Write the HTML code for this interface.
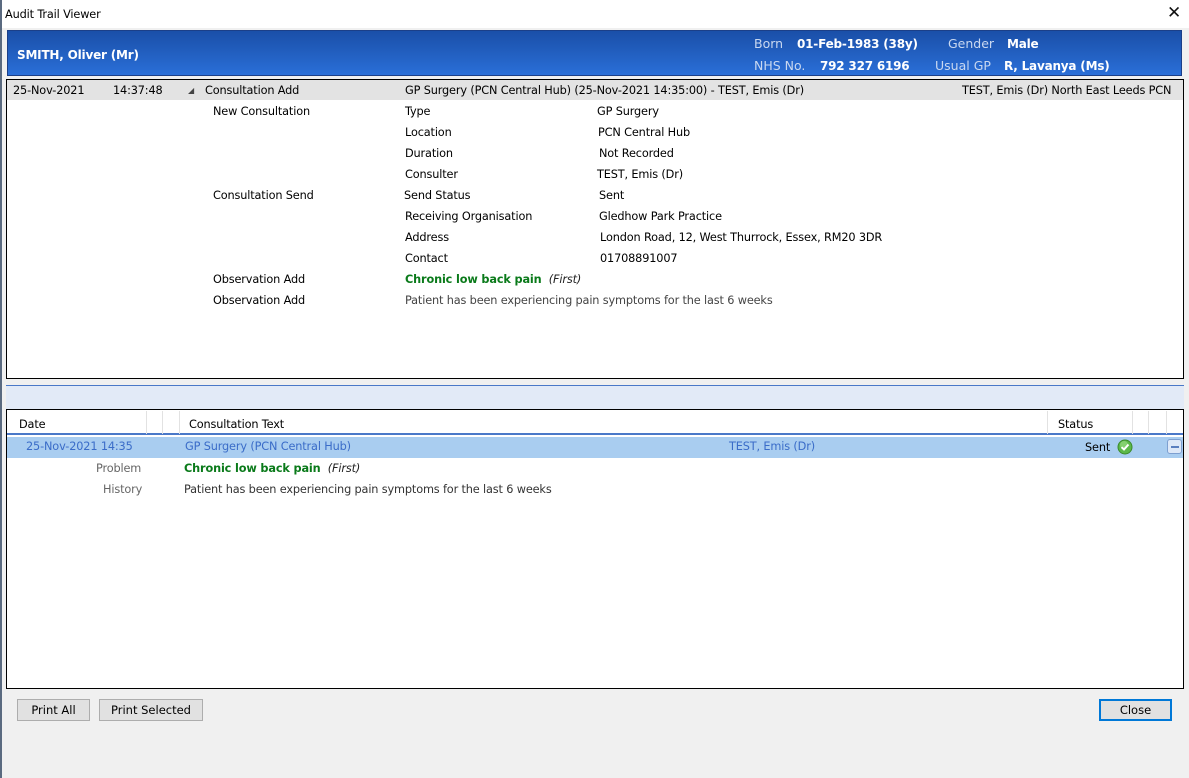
<!DOCTYPE html>
<html><head><meta charset="utf-8"><style>
*{margin:0;padding:0;box-sizing:border-box}
body{width:1189px;height:778px;background:#f0f0f0;font-family:"DejaVu Sans","Liberation Sans",sans-serif;font-size:12px;color:#000;position:relative;overflow:hidden}
.a{position:absolute;white-space:nowrap;line-height:16px;margin-top:1px}
.t{font-size:11.3px;letter-spacing:-0.15px}
.hb{color:#fff;font-weight:bold;font-size:12px;letter-spacing:-0.2px}
.hl{color:#c9d8f0;font-size:12.5px}
.btn{position:absolute;background:#e1e1e1;border:1px solid #adadad;text-align:center;line-height:21px;font-size:11.5px}
</style></head><body>
<div style="position:absolute;left:0;top:0;width:1189px;height:28px;background:#fff"></div>
<div style="position:absolute;left:0;top:0;width:2px;height:778px;background:#5a6a80"></div>
<div class="a t" style="left:5px;top:6px">Audit Trail Viewer</div>
<div class="a" style="left:1167px;top:4px;font-size:17px;font-family:'DejaVu Sans',sans-serif;color:#111">✕</div>
<div style="position:absolute;left:7px;top:30px;width:1175px;height:46px;background:linear-gradient(#1a4fa8,#2a6fd8);border:1px solid #1b3f88"></div>
<div class="a hb" style="left:17px;top:46px">SMITH, Oliver (Mr)</div>
<div class="a hl" style="left:754px;top:35px">Born</div>
<div class="a hb" style="left:797px;top:35px">01-Feb-1983 (38y)</div>
<div class="a hl" style="left:948px;top:35px">Gender</div>
<div class="a hb" style="left:1007px;top:35px">Male</div>
<div class="a hl" style="left:754px;top:57px">NHS No.</div>
<div class="a hb" style="left:820px;top:57px">792 327 6196</div>
<div class="a hl" style="left:935px;top:57px">Usual GP</div>
<div class="a hb" style="left:1004px;top:57px">R, Lavanya (Ms)</div>

<div style="position:absolute;left:6px;top:79px;width:1178px;height:300px;background:#fff;border:1px solid #000"></div>
<div style="position:absolute;left:7px;top:80px;width:1176px;height:20px;background:#e3e3e3"></div>
<div class="t a" style="left:13px;top:82px">25-Nov-2021</div>
<div class="t a" style="left:113px;top:82px">14:37:48</div>
<div class="a" style="left:188px;top:82px;font-size:8px;color:#444">◢</div>
<div class="t a" style="left:205px;top:82px">Consultation Add</div>
<div class="t a" style="left:405px;top:82px">GP Surgery (PCN Central Hub) (25-Nov-2021 14:35:00) - TEST, Emis (Dr)</div>
<div class="t a" style="left:962px;top:82px">TEST, Emis (Dr) North East Leeds PCN</div>

<div class="t a" style="left:213px;top:103px">New Consultation</div>
<div class="t a" style="left:405px;top:103px">Type</div><div class="t a" style="left:597px;top:103px">GP Surgery</div>
<div class="t a" style="left:405px;top:124px">Location</div><div class="t a" style="left:598px;top:124px">PCN Central Hub</div>
<div class="t a" style="left:405px;top:145px">Duration</div><div class="t a" style="left:599px;top:145px">Not Recorded</div>
<div class="t a" style="left:405px;top:166px">Consulter</div><div class="t a" style="left:597px;top:166px">TEST, Emis (Dr)</div>
<div class="t a" style="left:213px;top:187px">Consultation Send</div>
<div class="t a" style="left:404px;top:187px">Send Status</div><div class="t a" style="left:599px;top:187px">Sent</div>
<div class="t a" style="left:405px;top:208px">Receiving Organisation</div><div class="t a" style="left:599px;top:208px">Gledhow Park Practice</div>
<div class="t a" style="left:405px;top:229px">Address</div><div class="t a" style="left:600px;top:229px">London Road, 12, West Thurrock, Essex, RM20 3DR</div>
<div class="t a" style="left:405px;top:250px">Contact</div><div class="t a" style="left:600px;top:250px">01708891007</div>
<div class="t a" style="left:213px;top:271px">Observation Add</div>
<div class="t a" style="left:405px;top:271px;color:#0a7a1a;font-weight:bold">Chronic low back pain <span style="font-weight:normal;font-style:italic;color:#222">&nbsp;(First)</span></div>
<div class="t a" style="left:213px;top:292px">Observation Add</div>
<div class="t a" style="left:405px;top:292px;color:#444">Patient has been experiencing pain symptoms for the last 6 weeks</div>

<div style="position:absolute;left:6px;top:385px;width:1178px;height:24px;background:#e2eaf7;border-top:1px solid #4a78c8"></div>

<div style="position:absolute;left:6px;top:409px;width:1178px;height:280px;background:#fff;border:1px solid #000"></div>
<div style="position:absolute;left:7px;top:410px;width:1176px;height:25px;background:#fff;border-bottom:2px solid #4a78c8"></div>
<div style="position:absolute;left:146px;top:411px;width:1px;height:23px;background:#e2e2e2"></div>
<div style="position:absolute;left:162px;top:411px;width:1px;height:23px;background:#e2e2e2"></div>
<div style="position:absolute;left:179px;top:411px;width:1px;height:23px;background:#e2e2e2"></div>
<div style="position:absolute;left:1047px;top:411px;width:1px;height:23px;background:#e2e2e2"></div>
<div style="position:absolute;left:1132px;top:411px;width:1px;height:23px;background:#e2e2e2"></div>
<div style="position:absolute;left:1148px;top:411px;width:1px;height:23px;background:#e2e2e2"></div>
<div style="position:absolute;left:1166px;top:411px;width:1px;height:23px;background:#e2e2e2"></div>
<div class="t a" style="left:19px;top:416px">Date</div>
<div class="t a" style="left:189px;top:416px">Consultation Text</div>
<div class="t a" style="left:1058px;top:416px">Status</div>
<div style="position:absolute;left:7px;top:437px;width:1176px;height:21px;background:#a9cdf0"></div>
<div class="t a" style="left:26px;top:438px;color:#3a6cc8">25-Nov-2021 14:35</div>
<div class="t a" style="left:185px;top:438px;color:#3a6cc8">GP Surgery (PCN Central Hub)</div>
<div class="t a" style="left:729px;top:438px;color:#3a6cc8">TEST, Emis (Dr)</div>
<div class="t a" style="left:1085px;top:439px">Sent</div>
<svg style="position:absolute;left:1117px;top:439px" width="16" height="16" viewBox="0 0 16 16"><circle cx="8" cy="8" r="7" fill="#5cb84a" stroke="#3a8a2a"/><circle cx="7" cy="6" r="4" fill="#9ee08a" opacity=".6"/><path d="M4.5 8.2 L7 10.5 L11.5 5.5" fill="none" stroke="#fff" stroke-width="2"/></svg>
<div style="position:absolute;left:1167px;top:439px;width:15px;height:15px;border:1px solid #7d9fd0;border-radius:3px;background:#dde8f8"></div>
<div style="position:absolute;left:1171px;top:446px;width:8px;height:2px;background:#5a7fbf"></div>
<div class="t a" style="left:96px;top:460px;color:#666">Problem</div>
<div class="t a" style="left:184px;top:460px;color:#0a7a1a;font-weight:bold">Chronic low back pain <span style="font-weight:normal;font-style:italic;color:#222">&nbsp;(First)</span></div>
<div class="t a" style="left:103px;top:481px;color:#666">History</div>
<div class="t a" style="left:184px;top:481px;color:#333">Patient has been experiencing pain symptoms for the last 6 weeks</div>

<div class="btn" style="left:17px;top:699px;width:73px;height:22px">Print All</div>
<div class="btn" style="left:99px;top:699px;width:104px;height:22px">Print Selected</div>
<div class="btn" style="left:1099px;top:699px;width:73px;height:22px;border:2px solid #0078d7;line-height:19px">Close</div>
</body></html>
